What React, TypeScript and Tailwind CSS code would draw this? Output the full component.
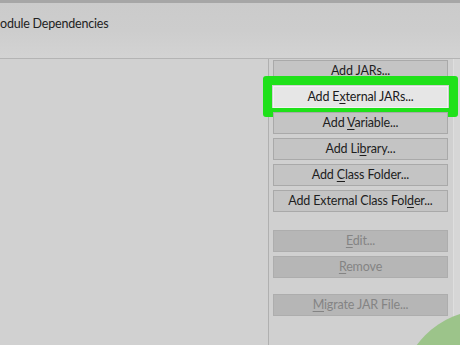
import React from 'react';

type Btn = { label: React.ReactNode; disabled?: boolean; active?: boolean; gap?: string };

const u = (s: string) => <span className="underline underline-offset-2">{s}</span>;

const buttons: Btn[] = [
  { label: <>Add {u('J')}ARs...</> },
  { label: <>Add E{u('x')}ternal JARs...</>, active: true },
  { label: <>Add {u('V')}ariable...</> },
  { label: <>Add Li{u('b')}rary...</> },
  { label: <>Add {u('C')}lass Folder...</> },
  { label: <>Add External Class Fol{u('d')}er...</> },
  { label: <>{u('E')}dit...</>, disabled: true, gap: 'mt-[14px]' },
  { label: <>{u('R')}emove</>, disabled: true },
  { label: <>{u('M')}igrate JAR File...</>, disabled: true, gap: 'mt-[12px]' },
];

function App() {
  return (
    <div
      className="relative w-[460px] h-[345px] overflow-hidden bg-[#d0d0d0] text-[#1e1e1e] flex flex-col"
      style={{ fontFamily: 'Lato, "Open Sans", sans-serif' }}
    >
      <div className="h-[3px] bg-[#a6a6a6]" />
      <div className="h-[56px] bg-gradient-to-b from-[#cbcbcb] via-[#cdcdcd] to-[#d3d3d3] border-b border-[#b4b4b4]">
        <div className="pt-[11px] text-[12.5px] tracking-[-0.2px] leading-5 text-[#222]">odule Dependencies</div>
      </div>

      <div className="flex flex-1">
        <div className="w-[269px] bg-[#d1d1d1] border-r border-[#b0b0b0]" />
        <div className="w-[184px] pl-[4px] pt-[1px] flex flex-col gap-[4px]">
          {buttons.map((b, i) => (
            <div key={i} className={`relative ${b.gap ?? ''}`}>
              <div
                className={`h-[22px] w-[175px] flex items-center justify-center text-[12.5px] tracking-[-0.15px] border ${
                  b.active
                    ? 'bg-[#e6e6e6] border-[#f2f2f2] text-[#1a1a1a]'
                    : b.disabled
                    ? 'bg-[#b6b6b6] border-[#adadad] text-[#848484]'
                    : 'bg-[#c4c4c4] border-[#a9a9a9] text-[#1e1e1e]'
                }`}
              >
                <span>{b.label}</span>
              </div>
              {b.active && (
                <div className="absolute -left-[10px] -right-[5px] -top-[10px] -bottom-[9px] border-[9px] border-[#1fe11a] rounded-[3px]" />
              )}
            </div>
          ))}
        </div>
        <div className="flex-1 bg-[#d6d6d6] border-l border-[#dedede]" />
      </div>

      <div className="absolute left-[400px] top-[310px] w-[172px] h-[172px] rounded-full bg-[#9cc48a]" />
    </div>
  );
}

export default App;
